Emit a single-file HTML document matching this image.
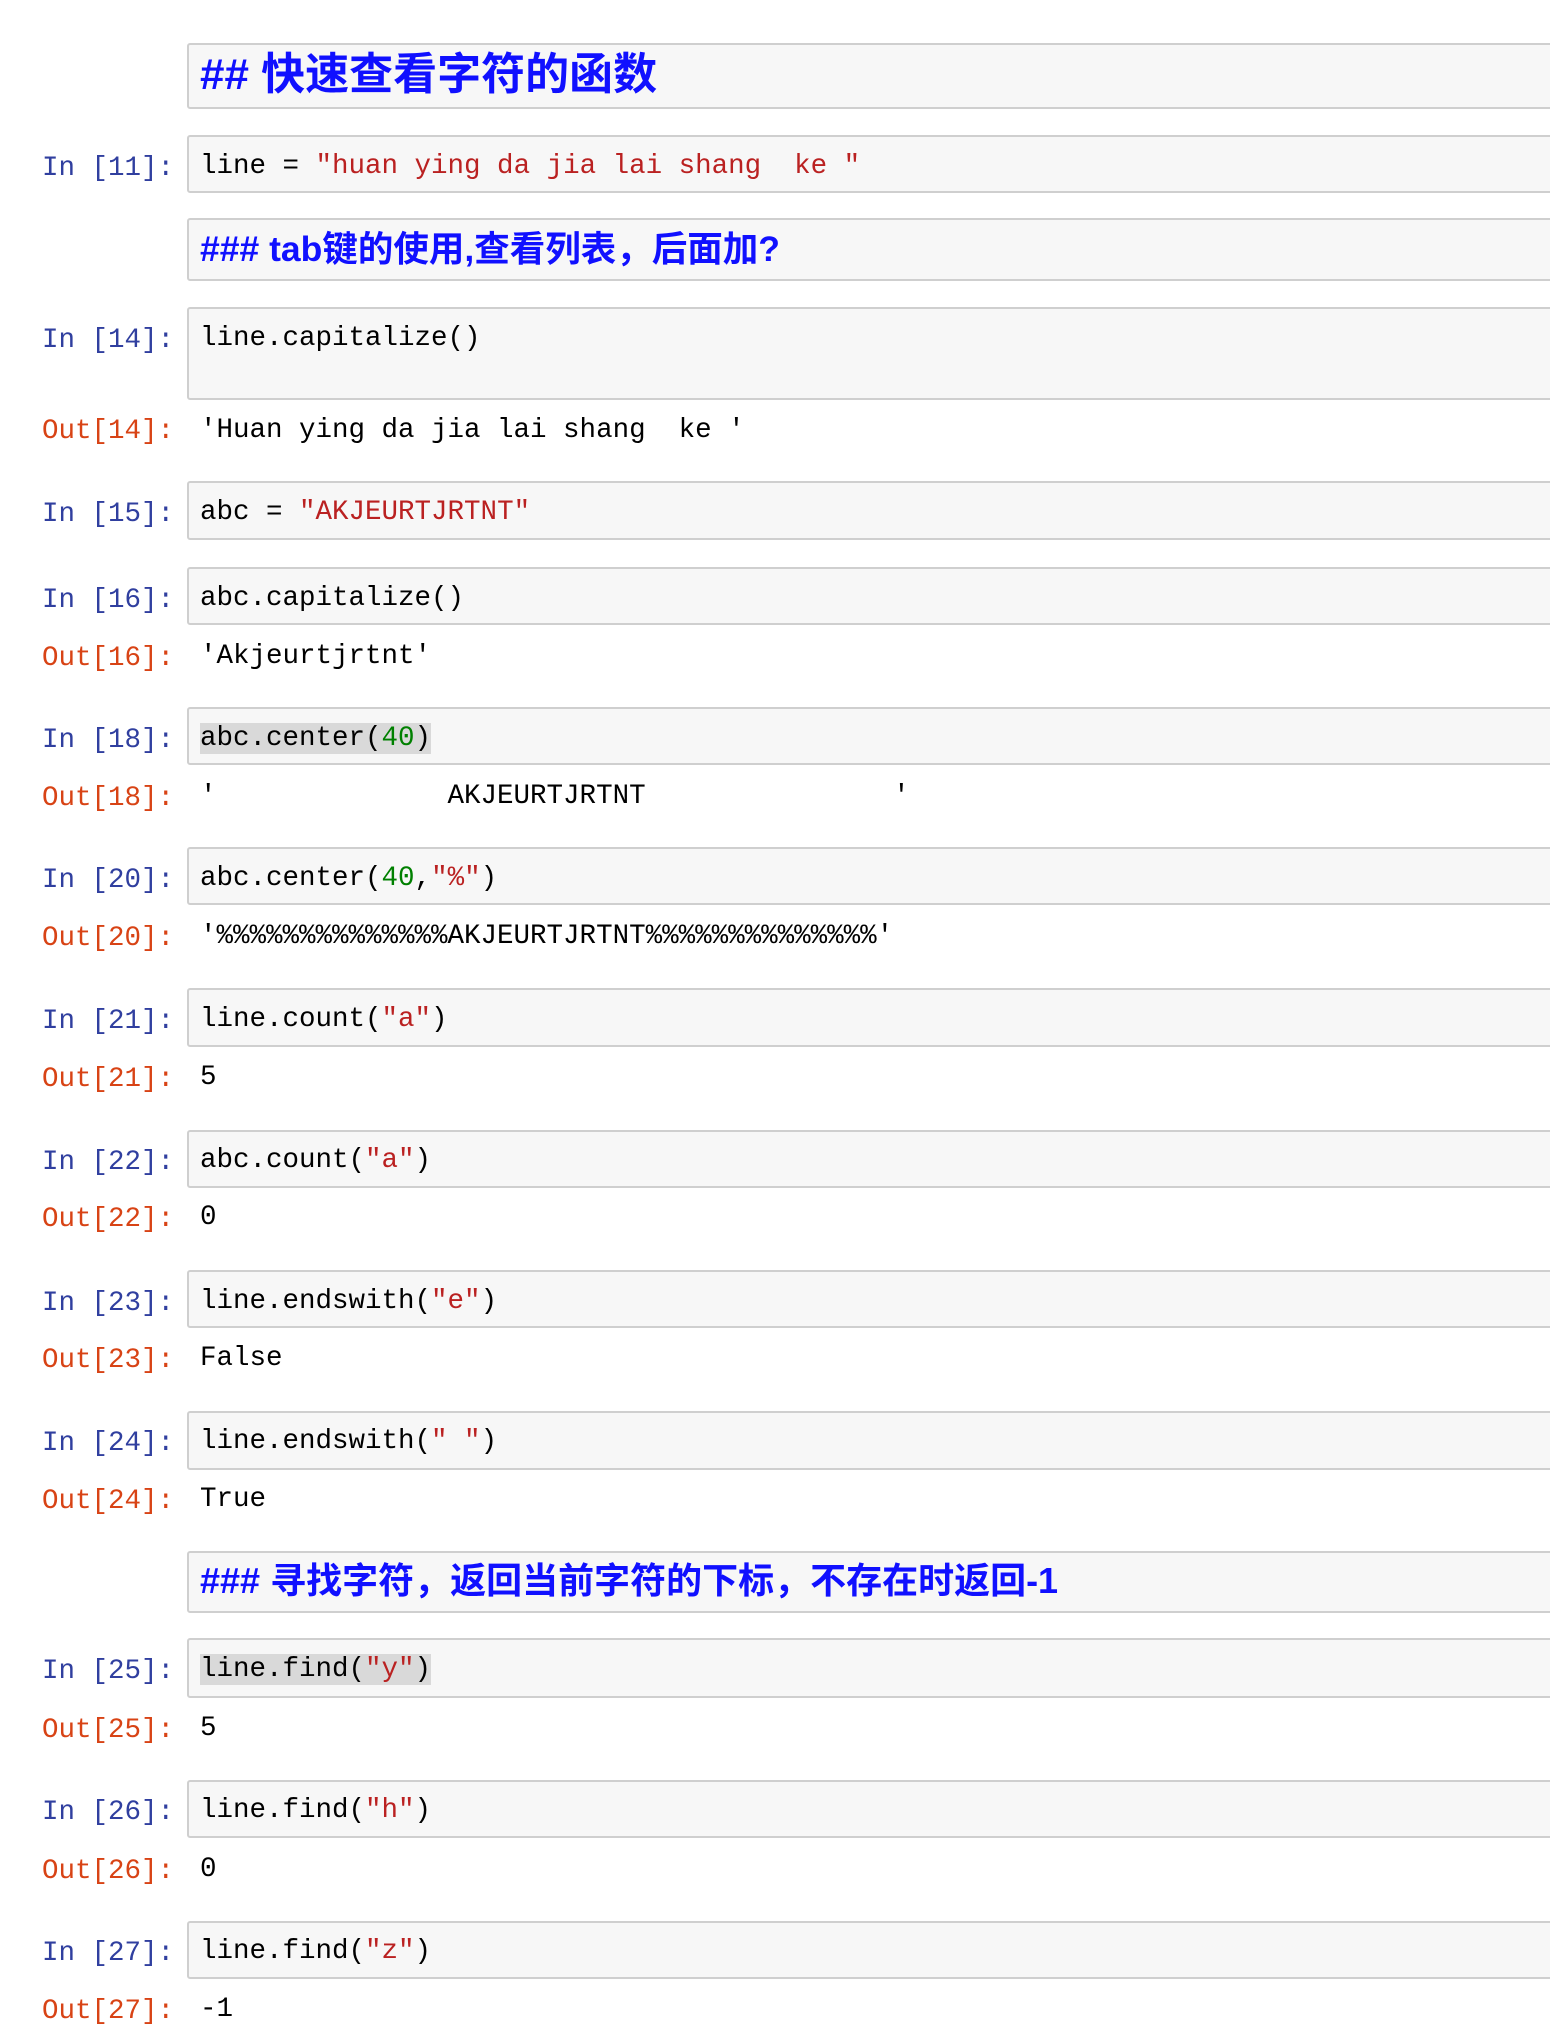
<!DOCTYPE html>
<html><head><meta charset="utf-8"><style>
body{margin:0;background:#fff;width:1550px;height:2034px;position:relative;overflow:hidden;font-family:"Liberation Mono",monospace;}
.box{position:absolute;left:187px;width:1400px;background:#f7f7f7;border:2px solid #cfcfcf;border-radius:3px;box-sizing:border-box;}
.p{position:absolute;left:0;width:174px;text-align:right;font-size:27.5px;white-space:pre;margin-top:3px;}
.in{color:#303f9f}.out{color:#d84315}
.t{position:absolute;left:200px;font-size:27.5px;white-space:pre;color:#000;margin-top:3px;}
.s{color:#ba2121}.n{color:#008000}
.hl{background:#d9d9d9}
.h{position:absolute;left:200px;color:#1010ff;font-weight:bold;font-family:"Liberation Sans","Noto Sans CJK SC",sans-serif;white-space:pre;}
</style></head><body>
<div class="box" style="top:43px;height:66px"></div>
<div class="h" style="top:47px;font-size:44px;line-height:56px">## 快速查看字符的函数</div>

<div class="box" style="top:135px;height:58px"></div>
<div class="p in" style="top:150px">In [11]:</div>
<div class="t" style="top:148px">line = <span class="s">"huan ying da jia lai shang  ke "</span></div>

<div class="box" style="top:218px;height:63px"></div>
<div class="h" style="top:227px;font-size:35.5px;line-height:44px">### tab键的使用,查看列表，后面加?</div>

<div class="box" style="top:307px;height:93px"></div>
<div class="p in" style="top:322px">In [14]:</div>
<div class="t" style="top:320px">line.capitalize()</div>
<div class="p out" style="top:413px">Out[14]:</div>
<div class="t" style="top:412px">'Huan ying da jia lai shang  ke '</div>

<div class="box" style="top:481px;height:59px"></div>
<div class="p in" style="top:496px">In [15]:</div>
<div class="t" style="top:494px">abc = <span class="s">"AKJEURTJRTNT"</span></div>

<div class="box" style="top:567px;height:58px"></div>
<div class="p in" style="top:582px">In [16]:</div>
<div class="t" style="top:580px">abc.capitalize()</div>
<div class="p out" style="top:640px">Out[16]:</div>
<div class="t" style="top:638px">'Akjeurtjrtnt'</div>

<div class="box" style="top:707px;height:58px"></div>
<div class="p in" style="top:722px">In [18]:</div>
<div class="t" style="top:720px"><span class="hl">abc.center(<span class="n">40</span>)</span></div>
<div class="p out" style="top:780px">Out[18]:</div>
<div class="t" style="top:778px">'              AKJEURTJRTNT               '</div>

<div class="box" style="top:847px;height:58px"></div>
<div class="p in" style="top:862px">In [20]:</div>
<div class="t" style="top:860px">abc.center(<span class="n">40</span>,<span class="s">"%"</span>)</div>
<div class="p out" style="top:920px">Out[20]:</div>
<div class="t" style="top:918px">'%%%%%%%%%%%%%%AKJEURTJRTNT%%%%%%%%%%%%%%'</div>

<div class="box" style="top:988px;height:59px"></div>
<div class="p in" style="top:1003px">In [21]:</div>
<div class="t" style="top:1001px">line.count(<span class="s">"a"</span>)</div>
<div class="p out" style="top:1061px">Out[21]:</div>
<div class="t" style="top:1059px">5</div>

<div class="box" style="top:1130px;height:58px"></div>
<div class="p in" style="top:1144px">In [22]:</div>
<div class="t" style="top:1142px">abc.count(<span class="s">"a"</span>)</div>
<div class="p out" style="top:1201px">Out[22]:</div>
<div class="t" style="top:1199px">0</div>

<div class="box" style="top:1270px;height:58px"></div>
<div class="p in" style="top:1285px">In [23]:</div>
<div class="t" style="top:1283px">line.endswith(<span class="s">"e"</span>)</div>
<div class="p out" style="top:1342px">Out[23]:</div>
<div class="t" style="top:1340px">False</div>

<div class="box" style="top:1411px;height:59px"></div>
<div class="p in" style="top:1425px">In [24]:</div>
<div class="t" style="top:1423px">line.endswith(<span class="s">" "</span>)</div>
<div class="p out" style="top:1483px">Out[24]:</div>
<div class="t" style="top:1481px">True</div>

<div class="box" style="top:1551px;height:62px"></div>
<div class="h" style="top:1560px;font-size:36px;line-height:42px">### 寻找字符，返回当前字符的下标，不存在时返回-1</div>

<div class="box" style="top:1638px;height:60px"></div>
<div class="p in" style="top:1653px">In [25]:</div>
<div class="t" style="top:1651px"><span class="hl">line.find(<span class="s">"y"</span>)</span></div>
<div class="p out" style="top:1712px">Out[25]:</div>
<div class="t" style="top:1710px">5</div>

<div class="box" style="top:1780px;height:58px"></div>
<div class="p in" style="top:1794px">In [26]:</div>
<div class="t" style="top:1792px">line.find(<span class="s">"h"</span>)</div>
<div class="p out" style="top:1853px">Out[26]:</div>
<div class="t" style="top:1851px">0</div>

<div class="box" style="top:1921px;height:58px"></div>
<div class="p in" style="top:1935px">In [27]:</div>
<div class="t" style="top:1933px">line.find(<span class="s">"z"</span>)</div>
<div class="p out" style="top:1993px">Out[27]:</div>
<div class="t" style="top:1991px">-1</div>
</body></html>
